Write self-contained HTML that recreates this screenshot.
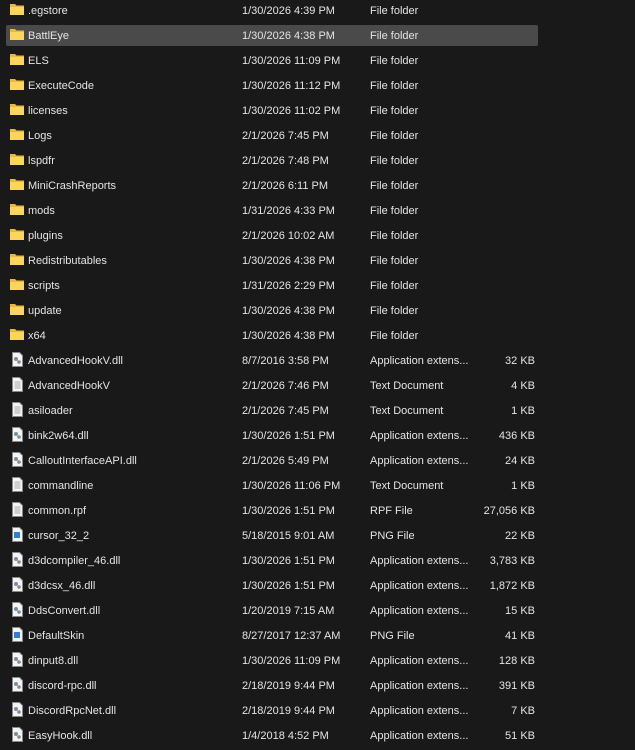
<!DOCTYPE html><html><head><style>
body{margin:0;background:#191919;width:635px;height:750px;overflow:hidden;font-family:"Liberation Sans",sans-serif;font-size:11px;color:#e4e4e4}
.r{position:absolute;left:6px;width:532px;height:21px;}
.sel{background:#4a4a4a;border-radius:2px}
.r span{position:absolute;top:5px;white-space:nowrap}
.n{left:22px}.d{left:236px}.t{left:364px}.s{right:3px}
.ic{position:absolute;left:4px;top:3px}
</style></head><body>
<svg width="0" height="0" style="position:absolute"><defs>
<g id="f"><path d="M0 2h5l1.5 1.5H14V13H0z" fill="#e8b93a"/><path d="M0 5h14v8H0z" fill="#fcd55f"/></g>
<g id="doc"><path d="M1.5 0.5h7l3 3v11h-10z" fill="#f4f4f4" stroke="#888"/><path d="M3.5 5h6M3.5 7h6M3.5 9h6M3.5 11h6" stroke="#aaa"/></g>
<g id="dll"><path d="M1.5 0.5h7l3 3v11h-10z" fill="#f4f4f4" stroke="#888"/><circle cx="5" cy="7" r="2" fill="#7a8ca8"/><circle cx="8" cy="10" r="1.8" fill="#8a8a8a"/></g>
<g id="png"><path d="M1.5 0.5h7l3 3v11h-10z" fill="#f4f4f4" stroke="#888"/><rect x="3" y="5" width="6" height="6" fill="#2f7fd8"/></g>
</defs></svg>
<div id="list"></div>
<script>
const rows=[
["f",".egstore","1/30/2026 4:39 PM","File folder",""],
["f","BattlEye","1/30/2026 4:38 PM","File folder",""],
["f","ELS","1/30/2026 11:09 PM","File folder",""],
["f","ExecuteCode","1/30/2026 11:12 PM","File folder",""],
["f","licenses","1/30/2026 11:02 PM","File folder",""],
["f","Logs","2/1/2026 7:45 PM","File folder",""],
["f","lspdfr","2/1/2026 7:48 PM","File folder",""],
["f","MiniCrashReports","2/1/2026 6:11 PM","File folder",""],
["f","mods","1/31/2026 4:33 PM","File folder",""],
["f","plugins","2/1/2026 10:02 AM","File folder",""],
["f","Redistributables","1/30/2026 4:38 PM","File folder",""],
["f","scripts","1/31/2026 2:29 PM","File folder",""],
["f","update","1/30/2026 4:38 PM","File folder",""],
["f","x64","1/30/2026 4:38 PM","File folder",""],
["dll","AdvancedHookV.dll","8/7/2016 3:58 PM","Application extens...","32 KB"],
["doc","AdvancedHookV","2/1/2026 7:46 PM","Text Document","4 KB"],
["doc","asiloader","2/1/2026 7:45 PM","Text Document","1 KB"],
["dll","bink2w64.dll","1/30/2026 1:51 PM","Application extens...","436 KB"],
["dll","CalloutInterfaceAPI.dll","2/1/2026 5:49 PM","Application extens...","24 KB"],
["doc","commandline","1/30/2026 11:06 PM","Text Document","1 KB"],
["doc","common.rpf","1/30/2026 1:51 PM","RPF File","27,056 KB"],
["png","cursor_32_2","5/18/2015 9:01 AM","PNG File","22 KB"],
["dll","d3dcompiler_46.dll","1/30/2026 1:51 PM","Application extens...","3,783 KB"],
["dll","d3dcsx_46.dll","1/30/2026 1:51 PM","Application extens...","1,872 KB"],
["dll","DdsConvert.dll","1/20/2019 7:15 AM","Application extens...","15 KB"],
["png","DefaultSkin","8/27/2017 12:37 AM","PNG File","41 KB"],
["dll","dinput8.dll","1/30/2026 11:09 PM","Application extens...","128 KB"],
["dll","discord-rpc.dll","2/18/2019 9:44 PM","Application extens...","391 KB"],
["dll","DiscordRpcNet.dll","2/18/2019 9:44 PM","Application extens...","7 KB"],
["dll","EasyHook.dll","1/4/2018 4:52 PM","Application extens...","51 KB"]];
let h="";rows.forEach((r,i)=>{const ic=r[0]=="f"?'<svg class="ic" width="14" height="15" style="top:2px"><use href="#f"/></svg>':'<svg class="ic" width="13" height="16" style="top:2px;left:5px"><use href="#'+r[0]+'"/></svg>';
h+=`<div class="r${i==1?' sel':''}" style="top:${i*25}px">${ic}<span class="n">${r[1]}</span><span class="d">${r[2]}</span><span class="t">${r[3]}</span><span class="s">${r[4]}</span></div>`});
document.getElementById("list").innerHTML=h;
</script></body></html>
